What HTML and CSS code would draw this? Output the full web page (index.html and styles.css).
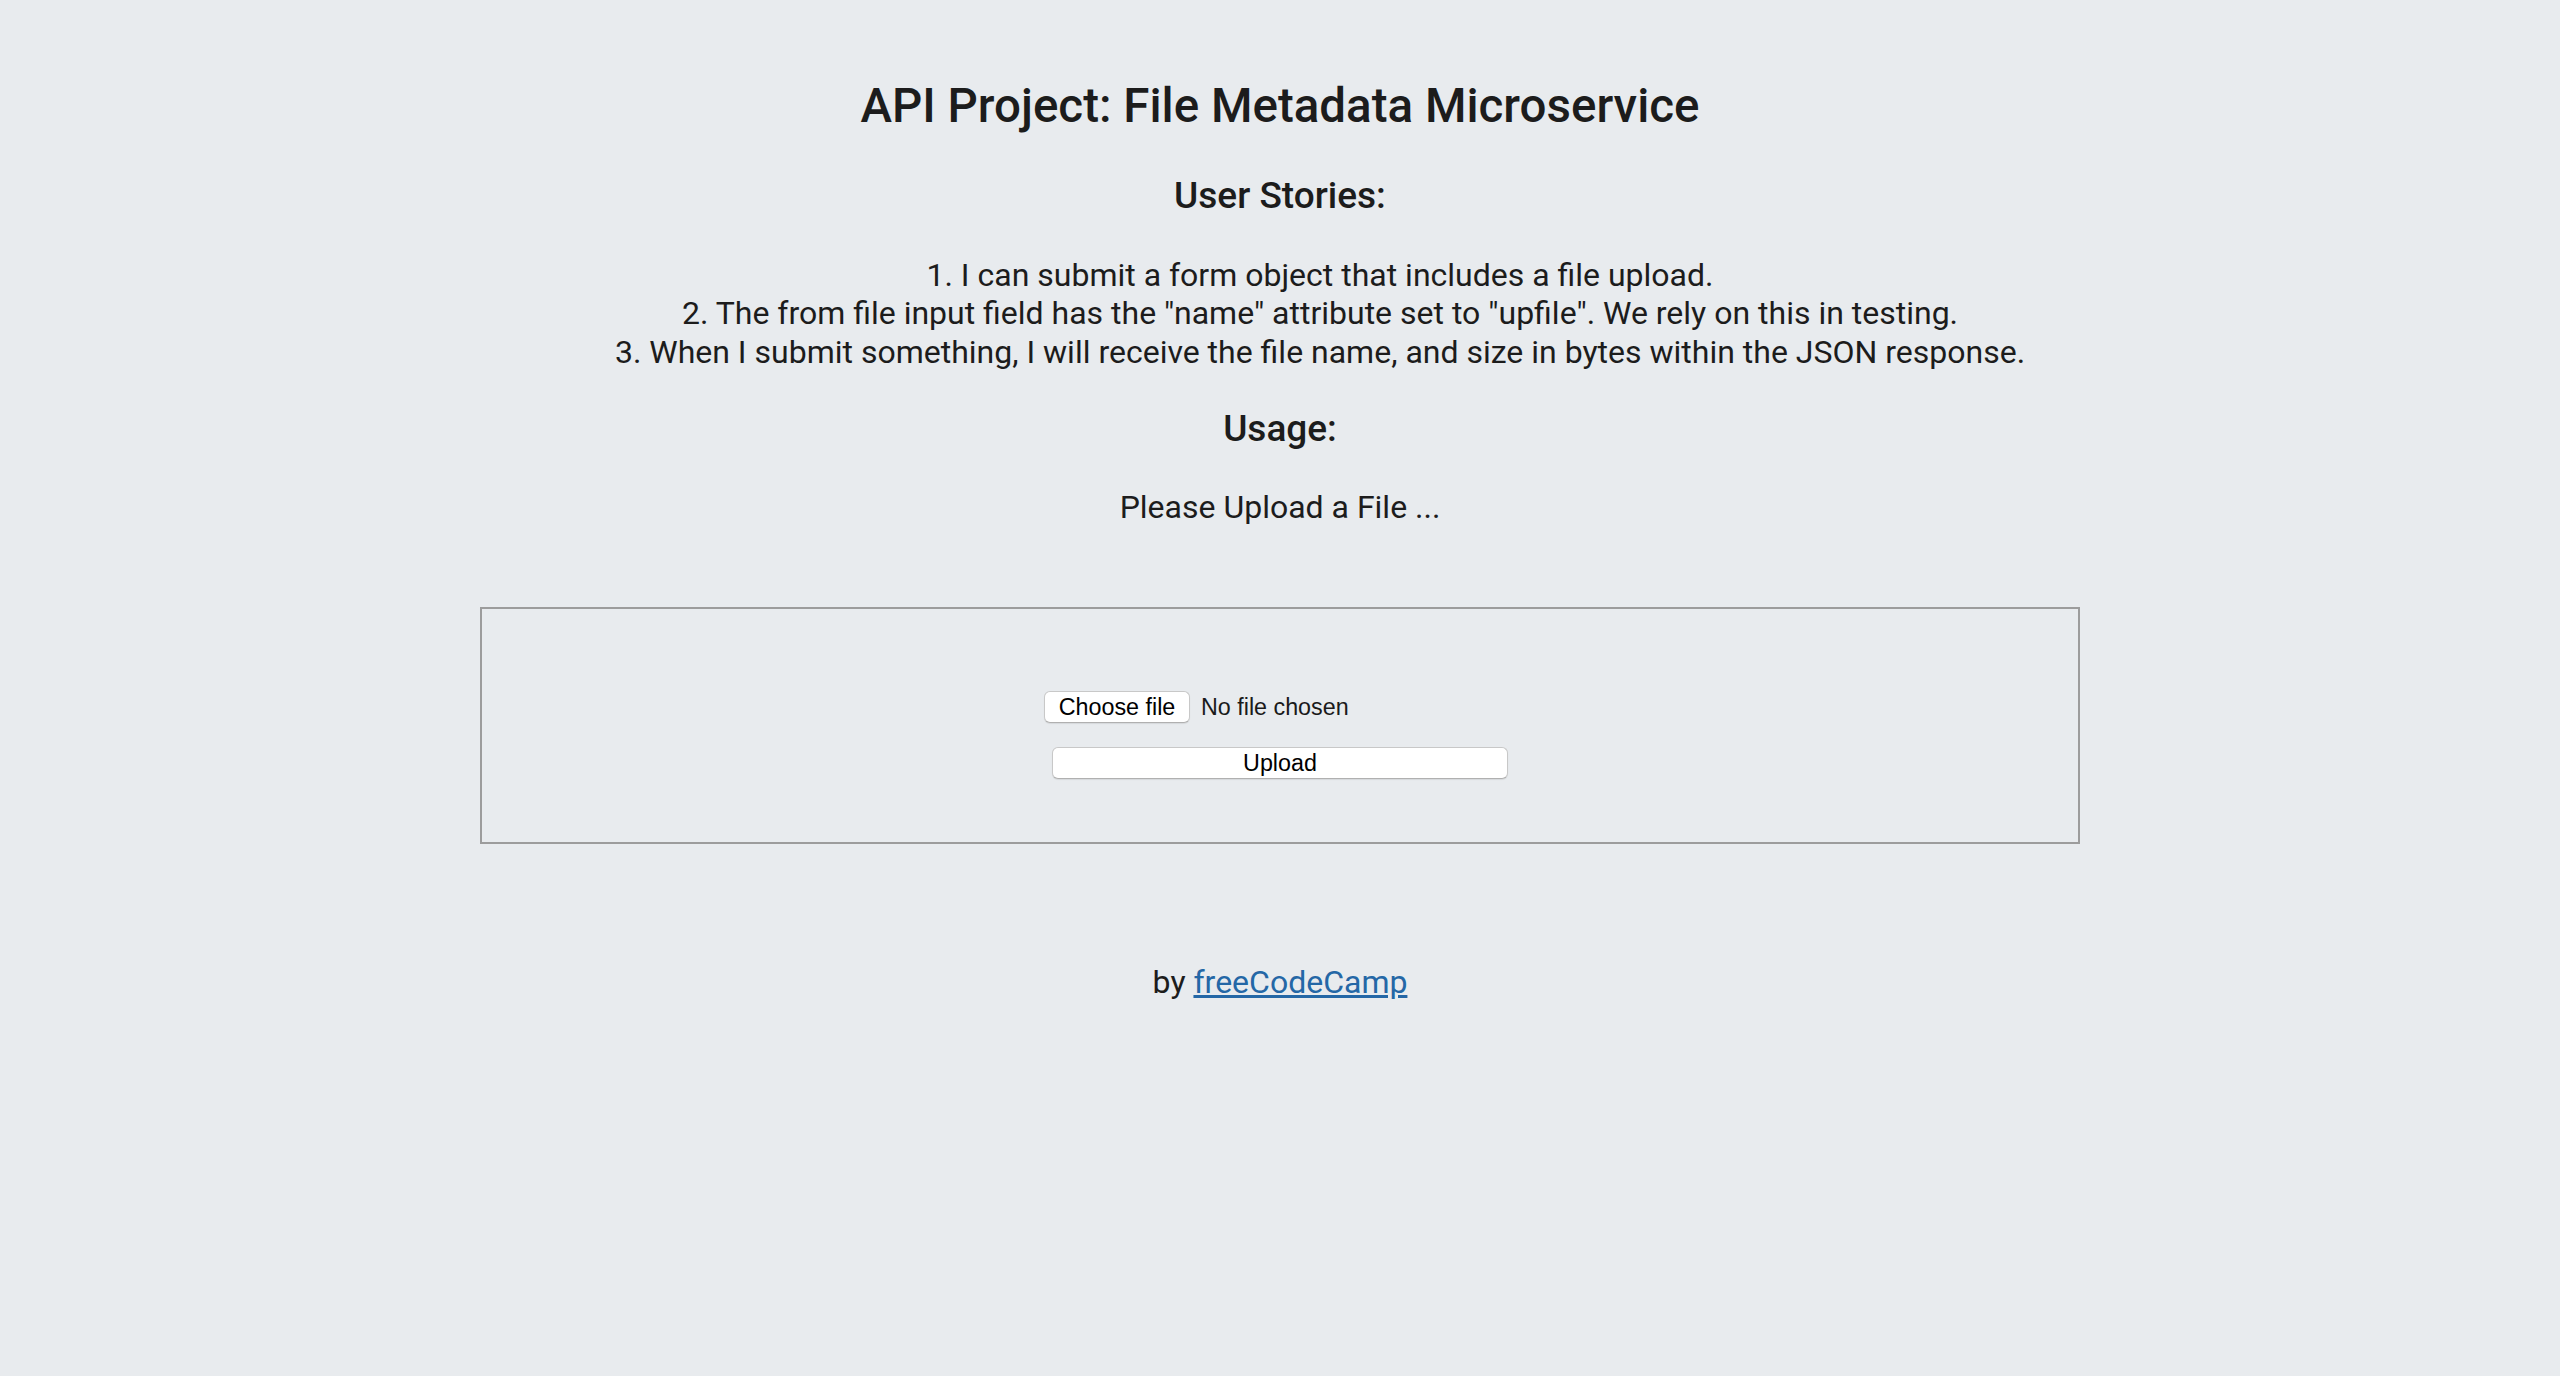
FILE: index.html
```html
<!DOCTYPE html>
<html lang="en">
<head>
<meta charset="utf-8">
<title>File Metadata Microservice</title>
<link rel="stylesheet" href="styles.css">
</head>
<body>
<div class="container">
  <h1 class="title">API Project: File Metadata Microservice</h1>
  <h3 class="subtitle">User Stories:</h3>
  <ol class="stories">
    <li>1. I can submit a form object that includes a file upload.</li>
    <li>2. The from file input field has the "name" attribute set to "upfile". We rely on this in testing.</li>
    <li>3. When I submit something, I will receive the file name, and size in bytes within the JSON response.</li>
  </ol>
  <h3 class="subtitle usage">Usage:</h3>
  <p class="hint">Please Upload a File ...</p>
  <div class="view">
    <form class="upload-form" action="#" method="post">
      <div class="file-row">
        <button type="button" class="btn choose">Choose file</button>
        <span class="file-name">No file chosen</span>
      </div>
      <button type="button" class="btn submit">Upload</button>
    </form>
  </div>
  <p class="footer">by <a href="#">freeCodeCamp</a></p>
</div>
</body>
</html>
```

FILE: styles.css
```css
html, body {
  margin: 0;
  padding: 0;
}
body {
  background: #e8ebee;
  color: #1c1c1c;
  font-family: Roboto, "Liberation Sans", sans-serif;
  text-align: center;
}
.container {
  padding-top: 77px;
  padding-bottom: 40px;
}
.title {
  margin: 0;
  font-size: 47.5px;
  line-height: 58px;
  font-weight: 500;
}
.subtitle {
  margin: 39px 0 0;
  font-size: 37px;
  line-height: 44px;
  font-weight: 500;
}
.stories {
  list-style: none;
  margin: 37.5px 0 0;
  padding: 0 0 0 80px;
  font-size: 32px;
  line-height: 38.5px;
}
.stories li {
  margin: 0;
}
.usage {
  margin-top: 36px;
}
.hint {
  margin: 37px 0 0;
  font-size: 32px;
  line-height: 38.5px;
}
.view {
  box-sizing: border-box;
  width: 1600px;
  margin: 80.5px auto 0;
  border: 2px solid #9c9c9c;
  padding: 82px 0 63px;
}
.upload-form {
  display: flex;
  flex-direction: column;
  align-items: center;
  gap: 24px;
}
.file-row {
  display: flex;
  align-items: center;
  width: 472px;
  gap: 11px;
}
.btn {
  box-sizing: border-box;
  height: 32px;
  margin: 0;
  padding: 0;
  background: #ffffff;
  border: 1px solid #c8c8c8;
  border-bottom-color: #b0b0b0;
  border-radius: 6px;
  box-shadow: 0 1px 1px rgba(0, 0, 0, 0.08);
  color: #000;
  font-family: "Liberation Sans", Arial, sans-serif;
  font-size: 23.3px;
  line-height: 30px;
}
.choose {
  width: 146px;
}
.file-name {
  font-family: "Liberation Sans", Arial, sans-serif;
  font-size: 23.3px;
  color: #1a1a1a;
}
.submit {
  width: 456px;
}
.footer {
  margin: 119px 0 0;
  font-size: 32px;
  line-height: 38.5px;
}
.footer a {
  color: #2467a6;
}
```
